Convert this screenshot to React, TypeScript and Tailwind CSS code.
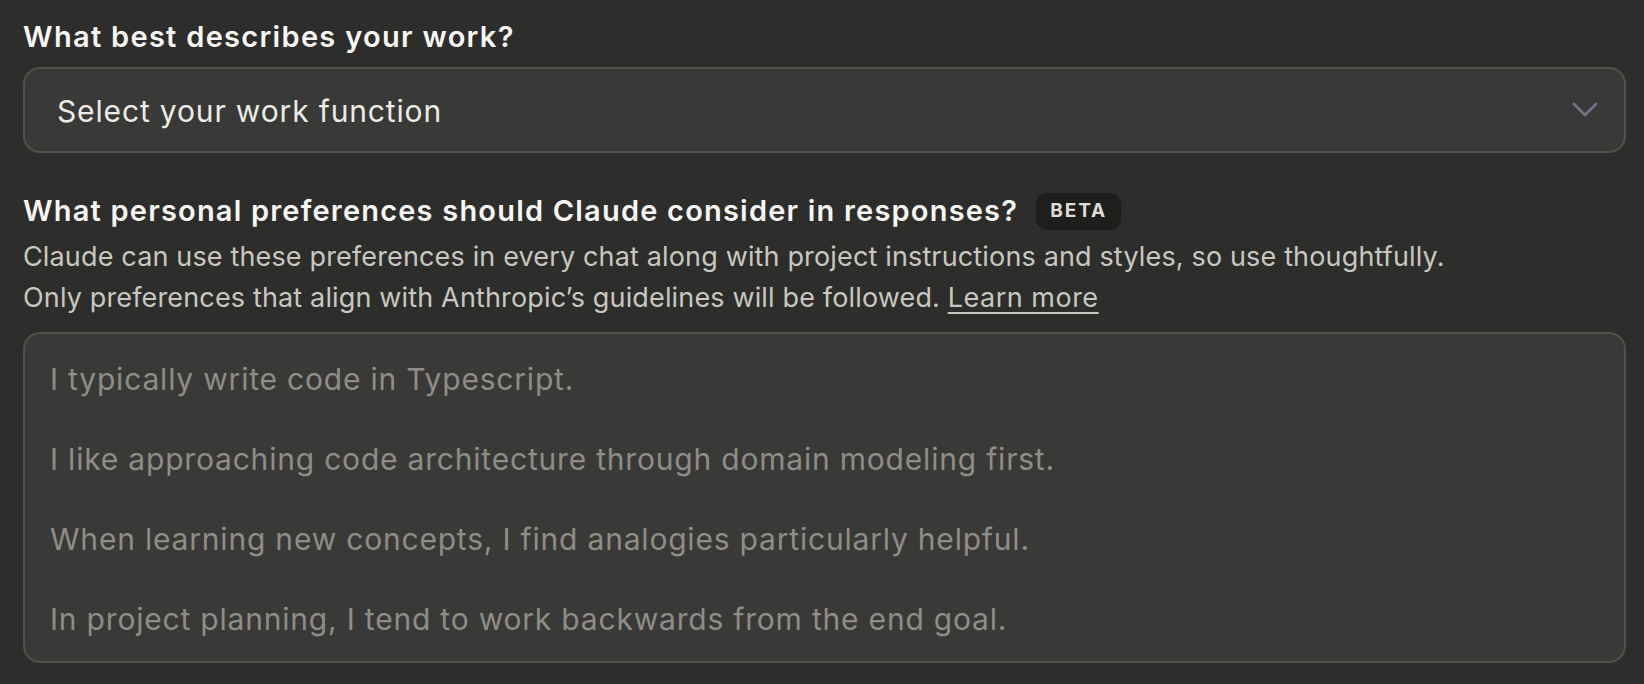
import React from "react";

export default function App() {
  const font = { fontFamily: "Inter, 'Noto Sans', sans-serif" };
  return (
    <div className="w-[1644px] h-[684px] bg-[#2d2d2b] text-[#f5f4ef] overflow-hidden" style={font}>
      <div className="pl-[23px] pr-[18px] pt-[18px] flex flex-col">
        <h2 className="text-[29px] leading-[38px] font-semibold tracking-[1.3px] text-[#f7f6f2]">What best describes your work?</h2>
        <div className="mt-[11px] h-[86px] rounded-[17px] border-2 border-[#51514b] bg-[#393937] flex items-center justify-between pl-[32px] pr-[26px]">
          <span className="text-[30px] tracking-[0.85px] text-[#ecebe6] mt-[2px]">Select your work function</span>
          <svg width="26" height="16" viewBox="0 0 26 16" fill="none">
            <path d="M2 2 L13 13 L24 2" stroke="#6f7488" strokeWidth="2.8" strokeLinecap="round" strokeLinejoin="round" />
          </svg>
        </div>
        <div className="mt-[38px] flex items-center gap-[18px]">
          <h2 className="text-[29px] leading-[40px] font-semibold tracking-[1.2px] text-[#f7f6f2]">What personal preferences should Claude consider in responses?</h2>
          <span className="h-[37px] px-[14px] rounded-[11px] bg-[#1e1e1c] flex items-center text-[19px] font-bold tracking-[0.1em] text-[#dedcd4]">BETA</span>
        </div>
        <p className="mt-[5px] text-[27px] leading-[41px] tracking-[0.15px] text-[#c9c7bf]">
          Claude can use these preferences in every chat along with project instructions and styles, so use thoughtfully.
          <br />
          Only preferences that align with Anthropic’s guidelines will be followed.{" "}
          <span className="underline underline-offset-[5px] decoration-[2px] tracking-[0.5px]">Learn more</span>
        </p>
        <div className="mt-[14px] h-[331px] rounded-[17px] border-2 border-[#51514b] bg-[#393937] px-[25px] pt-[25px]">
          <div className="text-[30px] leading-[40px] tracking-[0.8px] text-[#8f8d85]">
            <div>I typically write code in Typescript.</div>
            <div className="h-[40px]" />
            <div>I like approaching code architecture through domain modeling first.</div>
            <div className="h-[40px]" />
            <div>When learning new concepts, I find analogies particularly helpful.</div>
            <div className="h-[40px]" />
            <div>In project planning, I tend to work backwards from the end goal.</div>
          </div>
        </div>
      </div>
    </div>
  );
}
